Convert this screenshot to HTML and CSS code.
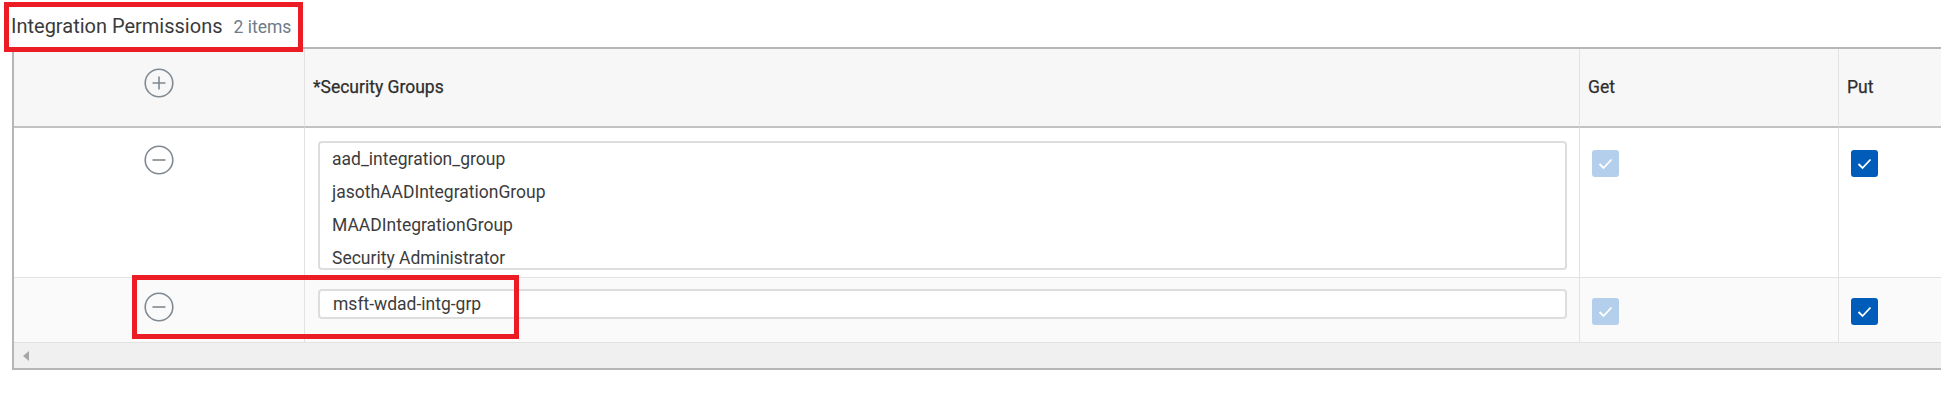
FILE: index.html
```html
<!DOCTYPE html>
<html>
<head>
<meta charset="utf-8">
<link rel="stylesheet" href="styles.css">
</head>
<body>
<div class="page">
  <div class="title-row">
    <span class="title">Integration Permissions</span>
    <span class="count">2 items</span>
  </div>
  <div class="table">
    <div class="grid">
      <div class="cell head icon-cell">
        <svg class="circle-btn" viewBox="0 0 30 30"><circle cx="15" cy="15" r="13.8" fill="none" stroke="#7f8992" stroke-width="1.6"/><path d="M15 8.5v13M8.5 15h13" stroke="#7f8992" stroke-width="1.6"/></svg>
      </div>
      <div class="cell head text">*Security Groups</div>
      <div class="cell head text">Get</div>
      <div class="cell head text last">Put</div>

      <div class="cell r1 icon-cell">
        <svg class="circle-btn" viewBox="0 0 30 30"><circle cx="15" cy="15" r="13.8" fill="none" stroke="#7f8992" stroke-width="1.6"/><path d="M8.5 15h13" stroke="#7f8992" stroke-width="1.6"/></svg>
      </div>
      <div class="cell r1 field">
        <div class="multi">
          <div class="item">aad_integration_group</div>
          <div class="item">jasothAADIntegrationGroup</div>
          <div class="item">MAADIntegrationGroup</div>
          <div class="item">Security Administrator</div>
        </div>
      </div>
      <div class="cell r1 check-cell">
        <span class="check light"><svg viewBox="0 0 27 27"><path d="M7.5 14l4 4 8-8.5" fill="none" stroke="#fff" stroke-width="1.8"/></svg></span>
      </div>
      <div class="cell r1 check-cell last">
        <span class="check dark"><svg viewBox="0 0 27 27"><path d="M7.5 14l4 4 8-8.5" fill="none" stroke="#fff" stroke-width="1.8"/></svg></span>
      </div>

      <div class="cell r2 icon-cell">
        <svg class="circle-btn" viewBox="0 0 30 30"><circle cx="15" cy="15" r="13.8" fill="none" stroke="#7f8992" stroke-width="1.6"/><path d="M8.5 15h13" stroke="#7f8992" stroke-width="1.6"/></svg>
      </div>
      <div class="cell r2 field">
        <div class="single">msft-wdad-intg-grp</div>
      </div>
      <div class="cell r2 check-cell">
        <span class="check light"><svg viewBox="0 0 27 27"><path d="M7.5 14l4 4 8-8.5" fill="none" stroke="#fff" stroke-width="1.8"/></svg></span>
      </div>
      <div class="cell r2 check-cell last">
        <span class="check dark"><svg viewBox="0 0 27 27"><path d="M7.5 14l4 4 8-8.5" fill="none" stroke="#fff" stroke-width="1.8"/></svg></span>
      </div>
    </div>
    <div class="hscroll"><span class="arrow"></span></div>
  </div>
  <div class="annot annot-title"></div>
  <div class="annot annot-row"></div>
</div>
</body>
</html>
```

FILE: styles.css
```css
html, body {
  margin: 0;
  padding: 0;
  background: #ffffff;
  overflow: hidden;
}
body {
  font-family: Roboto, "Liberation Sans", sans-serif;
  color: #333333;
}
.page {
  position: relative;
  width: 1941px;
  height: 419px;
}
.title-row {
  display: flex;
  align-items: baseline;
  gap: 11px;
  height: 47px;
  box-sizing: border-box;
  padding: 14px 0 0 11px;
}
.title {
  font-size: 20px;
  line-height: 24px;
  color: #3a3a3a;
}
.count {
  font-size: 17.5px;
  color: #6f7b88;
}
.table {
  margin-left: 12px;
  width: 2000px;
  border-top: 2px solid #b6b6b6;
  border-left: 2px solid #b6b6b6;
  border-bottom: 2px solid #b6b6b6;
}
.grid {
  display: grid;
  grid-template-columns: 291px 1275px 259px 175px;
  grid-template-rows: 79px 150px 65px;
}
.cell {
  box-sizing: border-box;
  border-right: 1px solid #e2e2e2;
  border-bottom: 1px solid #e2e2e2;
  font-size: 17.5px;
}
.cell.last {
  border-right: none;
}
.head {
  background: #f7f7f7;
  border-bottom: 2px solid #c2c2c2;
  font-weight: 400;
  color: #2e2e2e;
  -webkit-text-stroke: 0.25px #2e2e2e;
}
.head.text {
  display: flex;
  align-items: center;
  padding-left: 8px;
  padding-bottom: 2px;
}
.icon-cell {
  display: flex;
  justify-content: center;
}
.head.icon-cell {
  padding-top: 19px;
}
.circle-btn {
  width: 30px;
  height: 30px;
  display: block;
}
.r1.icon-cell { padding-top: 17px; }
.r2.icon-cell { padding-top: 14px; }
.r2 { background: #fafafa; }
.field {
  padding: 0 12px 0 13px;
}
.r1.field { padding-top: 13px; }
.r2.field { padding-top: 11px; }
.multi {
  height: 129px;
  box-sizing: border-box;
  border: 2px solid #dddddd;
  border-radius: 4px;
  background: #fff;
  overflow: hidden;
  padding-left: 12px;
}
.item {
  line-height: 33px;
  color: #3c3c3c;
  white-space: nowrap;
}
.single {
  height: 30px;
  box-sizing: border-box;
  border: 2px solid #dddddd;
  border-radius: 4px;
  background: #fff;
  padding-left: 13px;
  line-height: 26px;
  color: #3c3c3c;
}
.check-cell {
  padding-left: 12px;
}
.r1.check-cell { padding-top: 22px; }
.r2.check-cell { padding-top: 20px; }
.check {
  display: block;
  width: 27px;
  height: 27px;
  border-radius: 3px;
}
.check svg {
  display: block;
  width: 27px;
  height: 27px;
}
.check.light { background: #b4cfeb; }
.check.dark { background: #005cb9; }
.hscroll {
  height: 25px;
  background: #f0f0f0;
  display: flex;
  align-items: center;
  padding-left: 9px;
}
.arrow {
  width: 0;
  height: 0;
  border-top: 5px solid transparent;
  border-bottom: 5px solid transparent;
  border-right: 6px solid #a6a6a6;
}
.annot {
  position: absolute;
  border: 5px solid #ec1c24;
  box-sizing: border-box;
}
.annot-title {
  left: 4px;
  top: 2px;
  width: 299px;
  height: 50px;
}
.annot-row {
  left: 132px;
  top: 275px;
  width: 387px;
  height: 64px;
}
```
